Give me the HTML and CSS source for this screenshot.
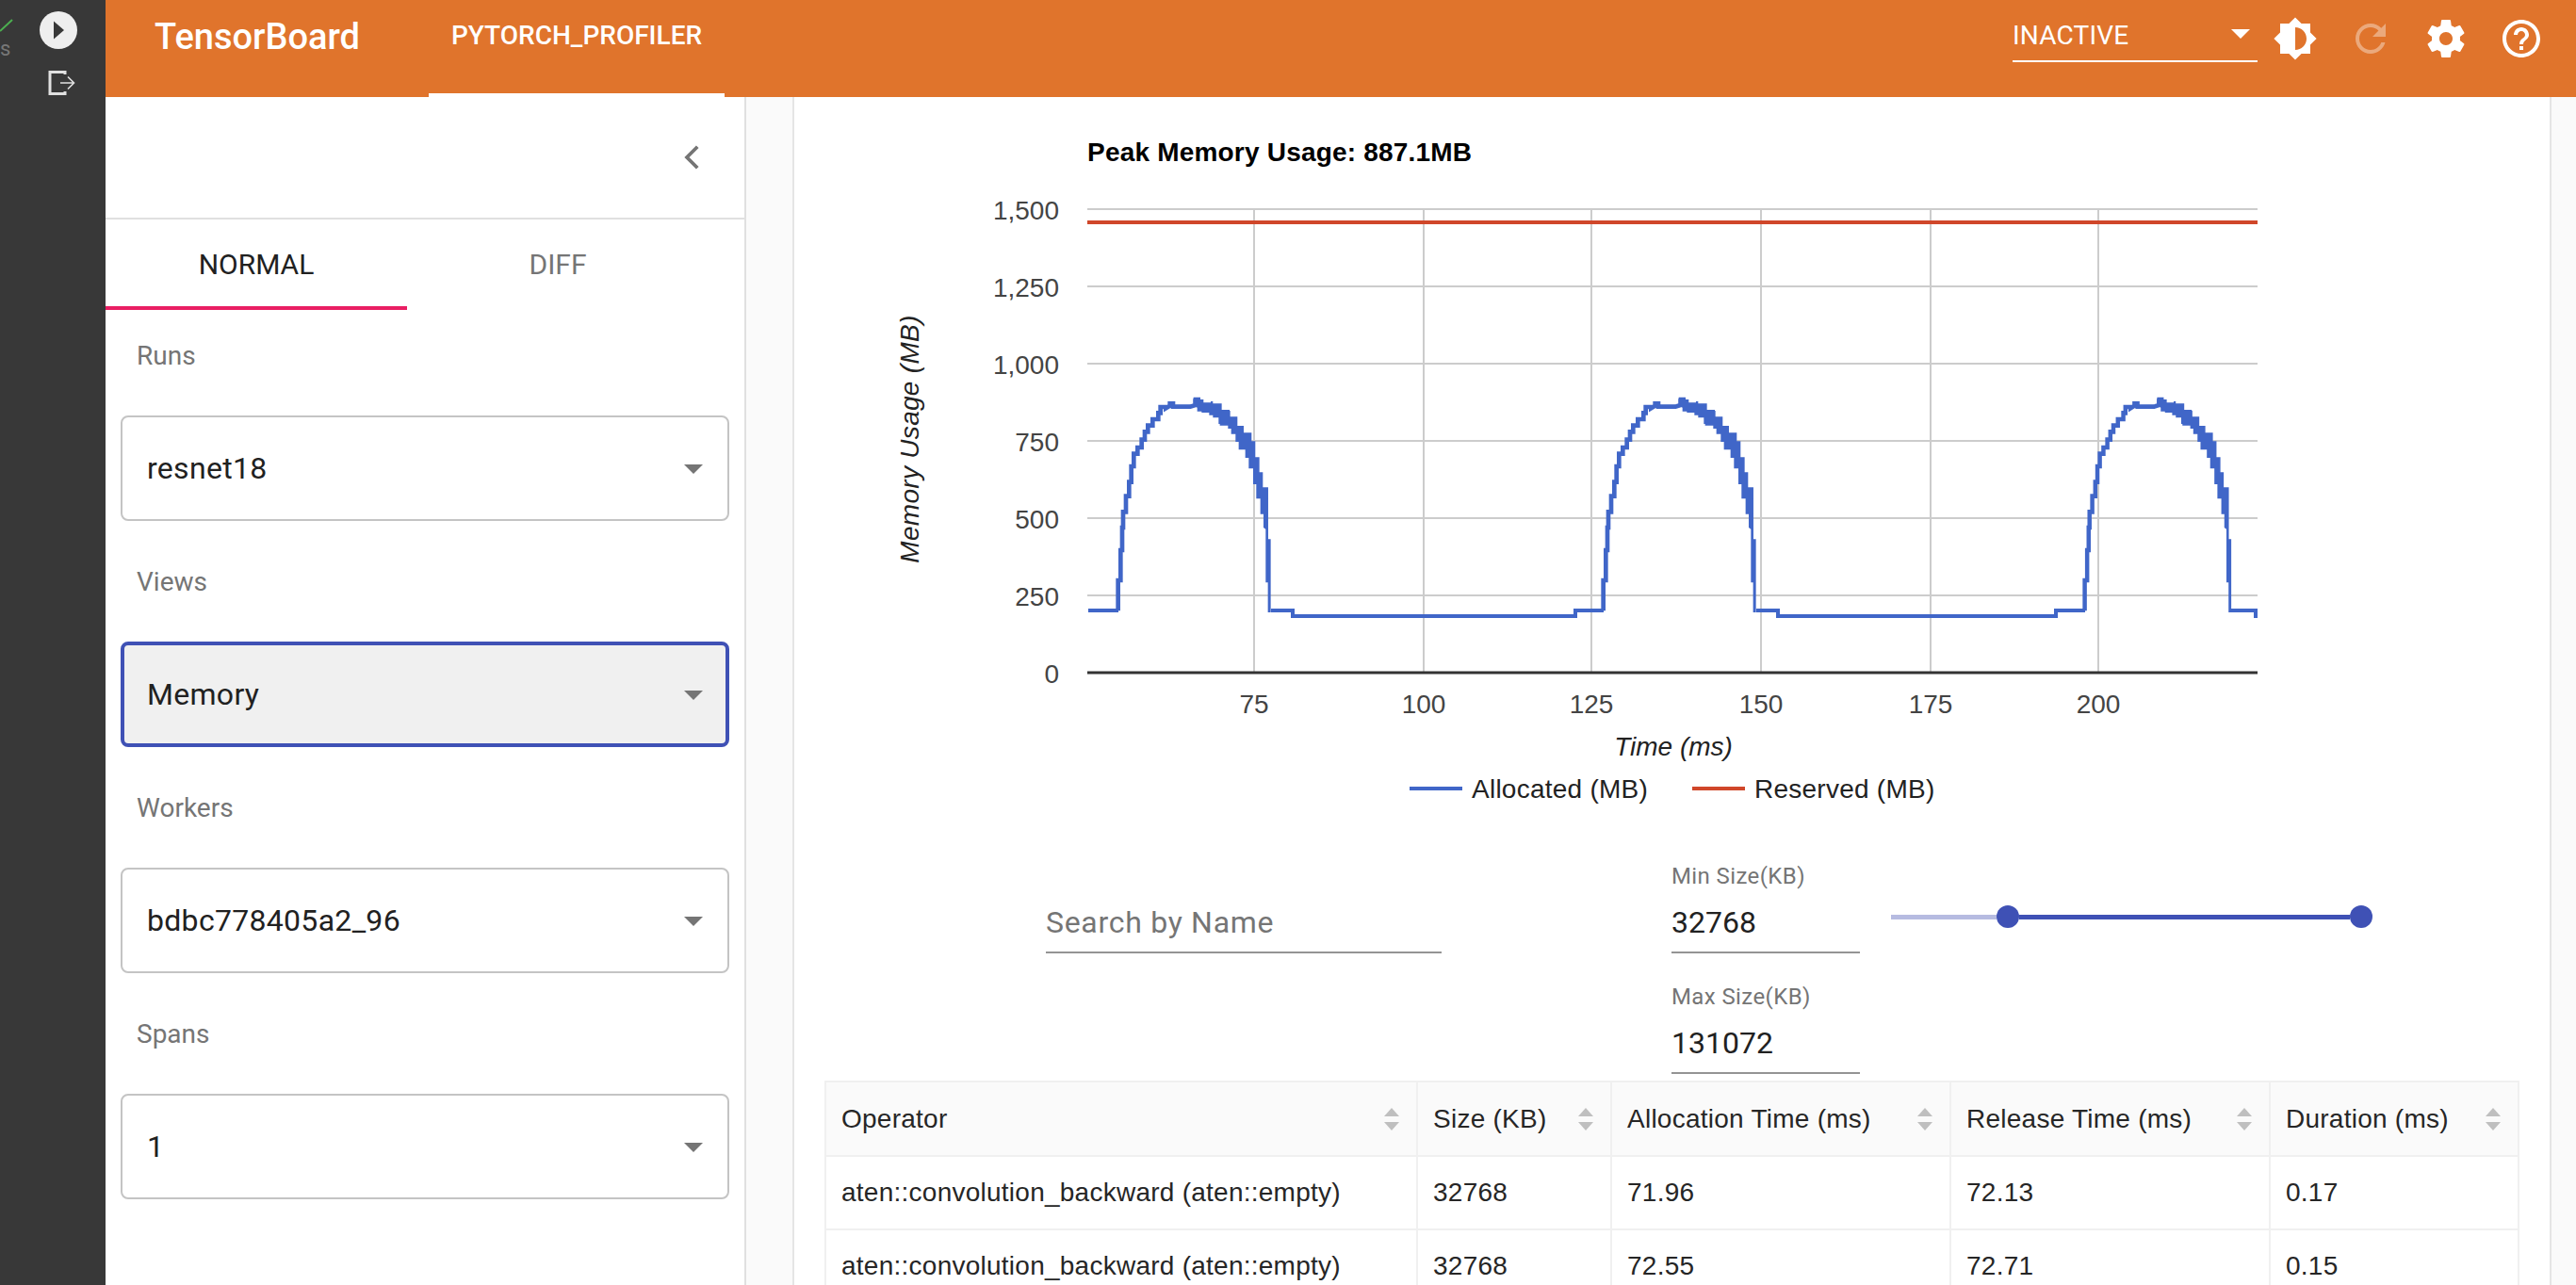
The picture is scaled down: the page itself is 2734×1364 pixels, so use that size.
FILE: index.html
```html
<!DOCTYPE html>
<html lang="en">
<head>
  <meta charset="UTF-8" />
  <title>TensorBoard</title>
  <link rel="stylesheet" href="styles.css">
</head>
<body>
  <div class="rail">
    <div class="rail-status">
      <svg class="check" viewBox="0 0 14 14"><path d="M0 13L13 1"/></svg>
      <span class="rail-s">s</span>
    </div>
    <div class="rail-actions">
      <svg class="play" viewBox="0 0 40 40"><circle cx="20" cy="20" r="20"/><path d="M15 10.5L26 20 15 29.5z"/></svg>
      <svg class="exit" viewBox="0 0 30 26"><path d="M18 4V1.5H2V24.5H18V22" /><path class="thin" d="M13 13H27M21 6.5L27.5 13 21 19.5"/></svg>
    </div>
  </div>

  <div class="app">
    <header class="topbar">
      <div class="brand">TensorBoard</div>
      <div class="plugin-tab">PYTORCH_PROFILER</div>
      <div class="topbar-right">
        <div class="status-select"><span>INACTIVE</span><i class="caret caret-white"></i></div>
        <button class="icon-btn"><svg viewBox="0 0 24 24"><path fill-rule="evenodd" d="M20 15.31L23.31 12 20 8.69V4h-4.69L12 .69 8.69 4H4v4.69L.69 12 4 15.31V20h4.69L12 23.31 15.31 20H20v-4.69zM12 18V6c3.31 0 6 2.69 6 6s-2.69 6-6 6z"/></svg></button>
        <button class="icon-btn dim"><svg viewBox="0 0 24 24"><path d="M17.65 6.35C16.2 4.9 14.21 4 12 4c-4.42 0-7.99 3.58-7.99 8s3.57 8 7.99 8c3.73 0 6.84-2.55 7.73-6h-2.08c-.82 2.33-3.04 4-5.65 4-3.31 0-6-2.69-6-6s2.69-6 6-6c1.66 0 3.14.69 4.22 1.78L13 11h7V4l-2.35 2.35z"/></svg></button>
        <button class="icon-btn"><svg viewBox="0 0 24 24"><path d="M19.43 12.98c.04-.32.07-.64.07-.98s-.03-.66-.07-.98l2.11-1.65c.19-.15.24-.42.12-.64l-2-3.46c-.12-.22-.39-.3-.61-.22l-2.49 1c-.52-.4-1.08-.73-1.69-.98l-.38-2.65C14.46 2.18 14.25 2 14 2h-4c-.25 0-.46.18-.49.42l-.38 2.65c-.61.25-1.17.59-1.69.98l-2.49-1c-.23-.09-.49 0-.61.22l-2 3.46c-.13.22-.07.49.12.64l2.11 1.65c-.04.32-.07.65-.07.98s.03.66.07.98l-2.11 1.65c-.19.15-.24.42-.12.64l2 3.46c.12.22.39.3.61.22l2.49-1c.52.4 1.08.73 1.69.98l.38 2.65c.03.24.24.42.49.42h4c.25 0 .46-.18.49-.42l.38-2.65c.61-.25 1.17-.59 1.69-.98l2.49 1c.23.09.49 0 .61-.22l2-3.46c.12-.22.07-.49-.12-.64l-2.11-1.65zM12 15.5c-1.93 0-3.5-1.57-3.5-3.5s1.57-3.5 3.5-3.5 3.5 1.57 3.5 3.5-1.57 3.5-3.5 3.5z"/></svg></button>
        <button class="icon-btn"><svg viewBox="0 0 24 24"><path d="M11 18h2v-2h-2v2zm1-16C6.48 2 2 6.48 2 12s4.48 10 10 10 10-4.48 10-10S17.52 2 12 2zm0 18c-4.41 0-8-3.59-8-8s3.59-8 8-8 8 3.59 8 8-3.59 8-8 8zm0-14c-2.21 0-4 1.79-4 4h2c0-1.1.9-2 2-2s2 .9 2 2c0 2-3 1.75-3 5h2c0-2.25 3-2.5 3-5 0-2.21-1.79-4-4-4z"/></svg></button>
      </div>
    </header>

    <div class="workspace">
      <aside class="sidebar">
        <div class="collapse-row">
          <svg class="chevron" viewBox="0 0 16 24"><path d="M13 3L4 12l9 9"/></svg>
        </div>
        <div class="mode-tabs">
          <div class="mode-tab active">NORMAL</div>
          <div class="mode-tab">DIFF</div>
        </div>
        <div class="filter">
          <div class="filter-label">Runs</div>
          <div class="filter-select"><span>resnet18</span><i class="caret"></i></div>
        </div>
        <div class="filter">
          <div class="filter-label">Views</div>
          <div class="filter-select focused"><span>Memory</span><i class="caret"></i></div>
        </div>
        <div class="filter">
          <div class="filter-label">Workers</div>
          <div class="filter-select"><span>bdbc778405a2_96</span><i class="caret"></i></div>
        </div>
        <div class="filter">
          <div class="filter-label">Spans</div>
          <div class="filter-select"><span>1</span><i class="caret"></i></div>
        </div>
      </aside>

      <main class="content">
        <div class="card">
          <!-- viewBox uses page coordinates so the chart numbers read straight off the screen -->
          <svg class="chart" viewBox="843 103 1863 780">
            <text class="chart-title" x="1154" y="171">Peak Memory Usage: 887.1MB</text>

            <g class="grid">
              <path d="M1154 222H2396M1154 304H2396M1154 386H2396M1154 468H2396M1154 550H2396M1154 632H2396"/>
              <path d="M1331 222V714M1511 222V714M1689 222V714M1869 222V714M2049 222V714M2227 222V714"/>
            </g>

            <path class="series-reserved" d="M1154 236H2396"/>

            <defs>
              <g id="hump">
                <path class="hump-line" d="M110 745V648H118V552H123V480H126V430H135V380H145V335H152V285H160V245H172V225H185V200H195V175H205V155H220V135H238V115H245V96H262V100L275 92V85H285V95H340L356 90V70"/>
                <path class="hump-band" d="M350 90V65H372V72H382V82H405V78H412V85H440V105H465V108H467V127H490V156H510V178H535V205H547V256H560V304H571V352H588V517H596V750H587V655H580V485L573 480V437H563V388H550V342H540V292H526V258H515V232H494V207H484V182H470V165H460V155H434V150H430V130H412V122H400V114H376V110H362V98z"/>
              </g>
            </defs>
            <g transform="translate(1150 400) scale(.3333)"><use href="#hump"/></g>
            <g transform="translate(1665 400) scale(.3333)"><use href="#hump"/></g>
            <g transform="translate(2177.4 400) scale(.32 .3333)"><use href="#hump"/></g>
            <path class="series-allocated" d="M1155 648H1187M1349 648H1372V654H1672V648H1702M1864 648H1887V654H2182V648H2213M2368 648H2394V656"/>

            <path class="axis" d="M1154 714H2396"/>

            <g class="tick tick-y">
              <text x="1124" y="233">1,500</text>
              <text x="1124" y="315">1,250</text>
              <text x="1124" y="397">1,000</text>
              <text x="1124" y="479">750</text>
              <text x="1124" y="561">500</text>
              <text x="1124" y="643">250</text>
              <text x="1124" y="725">0</text>
            </g>
            <g class="tick tick-x">
              <text x="1331" y="757">75</text>
              <text x="1511" y="757">100</text>
              <text x="1689" y="757">125</text>
              <text x="1869" y="757">150</text>
              <text x="2049" y="757">175</text>
              <text x="2227" y="757">200</text>
            </g>

            <text class="axis-title axis-title-y" transform="translate(975 466) rotate(-90)">Memory Usage (MB)</text>
            <text class="axis-title" x="1776" y="802">Time (ms)</text>

            <rect class="legend-blue" x="1496" y="835" width="56" height="4"/>
            <text class="legend-text" x="1562" y="847">Allocated (MB)</text>
            <rect class="legend-red" x="1796" y="835" width="56" height="4"/>
            <text class="legend-text" x="1862" y="847">Reserved (MB)</text>
          </svg>

          <div class="controls">
            <div class="search-field">
              <div class="field-input placeholder">Search by Name</div>
            </div>
            <div class="size-fields">
              <div class="size-field">
                <label>Min Size(KB)</label>
                <div class="field-input">32768</div>
              </div>
              <div class="size-field">
                <label>Max Size(KB)</label>
                <div class="field-input">131072</div>
              </div>
            </div>
            <div class="range">
              <span class="range-rest"></span>
              <span class="range-thumb"></span>
              <span class="range-active"></span>
              <span class="range-thumb"></span>
            </div>
          </div>

          <table class="op-table">
            <colgroup>
              <col class="col-op"><col class="col-size"><col class="col-alloc"><col class="col-release"><col class="col-duration">
            </colgroup>
            <thead>
              <tr>
                <th><div class="th-inner">Operator<span class="sorter"><i></i><i></i></span></div></th>
                <th><div class="th-inner">Size (KB)<span class="sorter"><i></i><i></i></span></div></th>
                <th><div class="th-inner">Allocation Time (ms)<span class="sorter"><i></i><i></i></span></div></th>
                <th><div class="th-inner">Release Time (ms)<span class="sorter"><i></i><i></i></span></div></th>
                <th><div class="th-inner">Duration (ms)<span class="sorter"><i></i><i></i></span></div></th>
              </tr>
            </thead>
            <tbody>
              <tr>
                <td>aten::convolution_backward (aten::empty)</td>
                <td>32768</td>
                <td>71.96</td>
                <td>72.13</td>
                <td>0.17</td>
              </tr>
              <tr>
                <td>aten::convolution_backward (aten::empty)</td>
                <td>32768</td>
                <td>72.55</td>
                <td>72.71</td>
                <td>0.15</td>
              </tr>
            </tbody>
          </table>
        </div>
      </main>
    </div>
  </div>
</body>
</html>
```

FILE: styles.css
```css
* {
  box-sizing: border-box;
}
html, body {
  margin: 0;
  height: 100%;
}
body {
  display: flex;
  height: 100vh;
  overflow: hidden;
  font-family: Roboto, sans-serif;
  background: #fafafa;
  color: #212121;
}

/* left rail */
.rail {
  width: 112px;
  flex: none;
  background: #383838;
  display: flex;
  overflow: hidden;
}
.rail-status {
  width: 42px;
  padding-top: 20px;
}
.check {
  display: block;
  width: 14px;
  height: 14px;
  fill: none;
  stroke: #4caf50;
  stroke-width: 2;
}
.rail-s {
  display: block;
  margin-top: 6px;
  font-size: 22px;
  line-height: 24px;
  color: #777;
}
.rail-actions {
  width: 40px;
  padding-top: 12px;
}
.play {
  display: block;
  width: 40px;
  height: 40px;
}
.play circle {
  fill: #eeeeee;
}
.play path {
  fill: #383838;
}
.exit {
  display: block;
  width: 30px;
  height: 26px;
  margin: 23px 0 0 9px;
  fill: none;
  stroke: #e0e0e0;
  stroke-width: 3;
}
.exit .thin {
  stroke-width: 1.6;
}

.app {
  flex: 1;
  min-width: 0;
  display: flex;
  flex-direction: column;
}

/* top bar */
.topbar {
  height: 103px;
  flex: none;
  background: #e0742c;
  color: white;
  display: flex;
  align-items: flex-start;
  padding-left: 52px;
}
.brand {
  width: 291px;
  font-size: 38px;
  font-weight: 500;
  line-height: 78px;
}
.plugin-tab {
  width: 314px;
  height: 103px;
  text-align: center;
  font-size: 28px;
  font-weight: 500;
  line-height: 76px;
  border-bottom: 4px solid white;
}
.topbar-right {
  margin-left: auto;
  display: flex;
  padding-right: 18px;
}
.status-select {
  width: 260px;
  height: 48px;
  margin-top: 18px;
  border-bottom: 2px solid white;
  display: flex;
  justify-content: space-between;
  font-size: 28px;
  line-height: 40px;
  letter-spacing: 0.2px;
  padding-right: 8px;
}
.caret {
  width: 0;
  height: 0;
  flex: none;
  border-left: 10px solid transparent;
  border-right: 10px solid transparent;
  border-top: 10px solid #757575;
  align-self: center;
}
.caret-white {
  border-top-color: white;
  margin-top: -10px;
}
.icon-btn {
  width: 80px;
  height: 82px;
  border: none;
  background: none;
  padding: 0;
  display: flex;
  align-items: center;
  justify-content: center;
}
.icon-btn svg {
  width: 48px;
  height: 48px;
  fill: white;
}
.icon-btn.dim svg {
  opacity: 0.38;
}

.workspace {
  flex: 1;
  min-height: 0;
  display: flex;
}

/* sidebar */
.sidebar {
  width: 680px;
  flex: none;
  background: white;
  border-right: 2px solid #e0e0e0;
}
.collapse-row {
  height: 130px;
  border-bottom: 2px solid #e0e0e0;
  display: flex;
  align-items: center;
  justify-content: flex-end;
  padding-right: 46px;
}
.chevron {
  width: 20px;
  height: 30px;
  fill: none;
  stroke: #757575;
  stroke-width: 3;
}
.mode-tabs {
  display: flex;
  height: 96px;
}
.mode-tab {
  width: 320px;
  display: flex;
  align-items: center;
  justify-content: center;
  padding-top: 2px;
  font-size: 30px;
  color: #757575;
  border-bottom: 4px solid transparent;
}
.mode-tab.active {
  color: #212121;
  border-bottom-color: #e91e63;
}
.filter + .filter {
  margin-top: 16px;
}
.filter-label {
  padding: 29px 33px 43px;
  font-size: 28px;
  line-height: 40px;
  color: #757575;
}
.filter-select {
  width: 646px;
  height: 112px;
  margin-left: 16px;
  padding: 0 26px 0 26px;
  border: 2px solid #c4c4c4;
  border-radius: 8px;
  display: flex;
  align-items: center;
  justify-content: space-between;
  font-size: 32px;
  letter-spacing: 0.3px;
}
.filter-select.focused {
  border: 4px solid #3f51b5;
  background: #f0f0f0;
  padding: 0 24px 0 24px;
}
.filter-select .caret {
  margin-top: 2px;
}

/* main card */
.content {
  flex: 1;
  min-width: 0;
  padding: 0 26px 0 49px;
}
.card {
  height: 100%;
  background: white;
  border-left: 2px solid #e5e5e5;
  border-right: 2px solid #e5e5e5;
}

/* chart */
.chart {
  display: block;
  width: 1863px;
  height: 780px;
}
.chart text {
  font-family: "Liberation Sans", Arial, sans-serif;
}
.chart-title {
  font-size: 28px;
  font-weight: bold;
  letter-spacing: 0.2px;
  fill: #000;
}
.grid path {
  fill: none;
  stroke: #cccccc;
  stroke-width: 2;
}
.axis {
  fill: none;
  stroke: #333333;
  stroke-width: 3;
}
.series-reserved {
  fill: none;
  stroke: #d0472a;
  stroke-width: 4;
}
.series-allocated {
  fill: none;
  stroke: #4066c8;
  stroke-width: 4;
}
.hump-line {
  fill: none;
  stroke: #4066c8;
  stroke-width: 14;
}
.hump-band {
  fill: #4066c8;
}
.tick text {
  font-size: 28px;
  fill: #444444;
}
.tick-y text {
  text-anchor: end;
}
.tick-x text {
  text-anchor: middle;
}
.chart .axis-title {
  font-size: 28px;
  font-style: italic;
  text-anchor: middle;
  fill: #222222;
}
.chart .axis-title-y {
  letter-spacing: 0.3px;
}
.chart .legend-text {
  font-size: 28px;
  letter-spacing: 0.25px;
  fill: #222222;
}
.legend-blue {
  fill: #4066c8;
}
.legend-red {
  fill: #d0472a;
}

/* filter controls above the table */
.controls {
  height: 264px;
  padding: 29px 0 0 267px;
  display: flex;
}
.search-field {
  width: 420px;
  margin-right: 244px;
  padding-top: 36px;
}
.field-input {
  height: 64px;
  line-height: 62px;
  font-size: 32px;
  border-bottom: 2px solid #949494;
}
.placeholder {
  color: #757575;
  letter-spacing: 0.7px;
}
.size-fields {
  width: 200px;
  display: flex;
  flex-direction: column;
  gap: 28px;
}
.size-field label {
  display: block;
  font-size: 24px;
  line-height: 36px;
  letter-spacing: 0.4px;
  color: #757575;
}
.range {
  width: 511px;
  height: 24px;
  margin: 49px 0 0 33px;
  display: flex;
  align-items: center;
}
.range-rest {
  width: 112px;
  height: 5px;
  background: #b6bbe1;
}
.range-active {
  width: 351px;
  height: 5px;
  background: #3f51b5;
}
.range-thumb {
  width: 24px;
  height: 24px;
  border-radius: 50%;
  background: #3f51b5;
}

/* operator table */
.op-table {
  width: 1799px;
  margin-left: 32px;
  table-layout: fixed;
  border-collapse: separate;
  border-spacing: 0;
  font-family: "Liberation Sans", Arial, sans-serif;
  font-size: 28px;
  letter-spacing: 0.25px;
  color: #262626;
}
.col-op { width: 630px; }
.col-size { width: 206px; }
.col-alloc { width: 360px; }
.col-release { width: 339px; }
.col-duration { width: 264px; }
.op-table th, .op-table td {
  padding: 0 16px;
  text-align: left;
  font-weight: normal;
  border-right: 2px solid #f0f0f0;
  border-bottom: 2px solid #f0f0f0;
}
.op-table th:first-child, .op-table td:first-child {
  border-left: 2px solid #f0f0f0;
}
.op-table th {
  height: 81px;
  background: #fafafa;
  border-top: 2px solid #f0f0f0;
}
.op-table td {
  height: 78px;
}
.th-inner {
  display: flex;
  align-items: center;
  justify-content: space-between;
}
.sorter {
  display: flex;
  flex-direction: column;
  gap: 6px;
  margin-right: 2px;
}
.sorter i {
  width: 0;
  height: 0;
  border-left: 8px solid transparent;
  border-right: 8px solid transparent;
  border-bottom: 9px solid #bfbfbf;
}
.sorter i + i {
  border-bottom: none;
  border-top: 9px solid #bfbfbf;
}
```
